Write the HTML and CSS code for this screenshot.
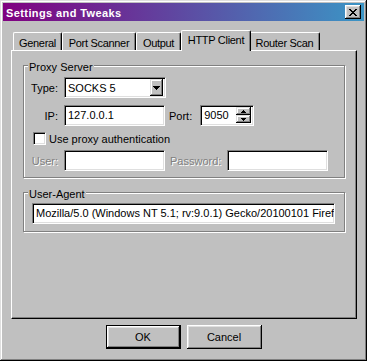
FILE: index.html
```html
<!DOCTYPE html>
<html lang="en">
<head>
  <meta charset="UTF-8">
  <title>Settings and Tweaks</title>
  <link rel="stylesheet" href="styles.css">
</head>
<body>
  <div class="window">
    <!-- Caption bar -->
    <div class="titlebar">
      <span class="title">Settings and Tweaks</span>
      <span class="close">
        <svg width="8" height="7" viewBox="0 0 8 7" shape-rendering="crispEdges">
          <path d="M0 0h2v1H0z M6 0h2v1H6z M1 1h2v1H1z M5 1h2v1H5z M2 2h4v1H2z M3 3h2v1H3z M2 4h4v1H2z M1 5h2v1H1z M5 5h2v1H5z M0 6h2v1H0z M6 6h2v1H6z" fill="#000"/>
        </svg>
      </span>
    </div>

    <div class="client">
      <div class="tabs">
        <div class="tab tab-general">General</div>
        <div class="tab tab-scanner">Port Scanner</div>
        <div class="tab tab-output">Output</div>
        <div class="tab tab-http active">HTTP Client</div>
        <div class="tab tab-router">Router Scan</div>
      </div>

      <div class="panel">
        <div class="group proxy">
          <span class="group-title">Proxy Server</span>

          <div class="row row-type">
            <span class="lbl">Type:</span>
            <div class="combo">
              <span class="combo-text">SOCKS 5</span>
              <span class="combo-btn">
                <svg width="7" height="4" viewBox="0 0 7 4" shape-rendering="crispEdges">
                  <path d="M0 0h7v1H0z M1 1h5v1H1z M2 2h3v1H2z M3 3h1v1H3z" fill="#000"/>
                </svg>
              </span>
            </div>
          </div>

          <div class="row row-ip">
            <span class="lbl">IP:</span>
            <div class="edit edit-ip">127.0.0.1</div>
            <span class="lbl-port">Port:</span>
            <div class="edit spin-edit">
              <span class="spin-text">9050</span>
              <span class="spin">
                <span class="spin-btn">
                  <svg width="5" height="3" viewBox="0 0 5 3" shape-rendering="crispEdges">
                    <path d="M2 0h1v1H2z M1 1h3v1H1z M0 2h5v1H0z" fill="#000"/>
                  </svg>
                </span>
                <span class="spin-btn">
                  <svg width="5" height="3" viewBox="0 0 5 3" shape-rendering="crispEdges">
                    <path d="M0 0h5v1H0z M1 1h3v1H1z M2 2h1v1H2z" fill="#000"/>
                  </svg>
                </span>
              </span>
            </div>
          </div>

          <div class="row row-check">
            <span class="checkbox"></span>
            <span class="check-label">Use proxy authentication</span>
          </div>

          <div class="row row-user">
            <span class="lbl disabled">User:</span>
            <div class="edit edit-user"></div>
            <span class="lbl-pass disabled">Password:</span>
            <div class="edit edit-pass"></div>
          </div>
        </div>

        <div class="group agent">
          <span class="group-title">User-Agent</span>
          <div class="edit edit-agent">Mozilla/5.0 (Windows NT 5.1; rv:9.0.1) Gecko/20100101 Firefox/9.0.1</div>
        </div>
      </div>

      <div class="buttons">
        <button class="btn default">OK</button>
        <button class="btn">Cancel</button>
      </div>
    </div>
  </div>
</body>
</html>
```

FILE: styles.css
```css
body {
  margin: 0;
  font-family: "Liberation Sans", Arial, sans-serif;
  font-size: 11px;
  color: #000;
  background: #c0c0c0;
}
/* Outer window frame */
.window {
  width: 367px;
  height: 361px;
  box-sizing: border-box;
  padding: 3px;
  background: #c0c0c0;
  box-shadow: inset -1px -1px #000, inset 1px 1px #dfdfdf, inset -2px -2px #808080, inset 2px 2px #fff;
  display: flex;
  flex-direction: column;
}
.titlebar {
  height: 18px;
  flex: none;
  display: flex;
  align-items: center;
  justify-content: space-between;
  padding: 0 3px 0 3px;
  background: linear-gradient(90deg, #800080, #3b95c5);
}
.title {
  color: #fff;
  font-weight: bold;
  letter-spacing: 0.4px;
  line-height: 14px;
  margin-top: 2px;
}
.close {
  width: 16px;
  height: 14px;
  box-sizing: border-box;
  display: flex;
  align-items: center;
  justify-content: center;
  background: #c0c0c0;
  box-shadow: inset -1px -1px #000, inset 1px 1px #fff, inset -2px -2px #808080, inset 2px 2px #dfdfdf;
}
.client {
  flex: 1;
  padding: 9px 0 0 8px;
}
/* Tab strip */
.tabs {
  display: flex;
  align-items: flex-end;
  height: 20px;
  padding-left: 2px;
}
.tab {
  height: 18px;
  box-sizing: border-box;
  padding-top: 3px;
  line-height: 14px;
  letter-spacing: -0.3px;
  text-align: center;
  border-top: 1px solid #fff;
  border-left: 1px solid #fff;
  border-right: 1px solid #000;
  border-radius: 2px 2px 0 0;
  box-shadow: inset -1px 0 #808080;
  white-space: nowrap;
}
.tab-general { width: 49px; }
.tab-scanner { width: 74px; }
.tab-output { width: 45px; }
.tab-http { width: 70px; }
.tab-router { width: 71px; }
.tab.active {
  height: 21px;
  margin: 0 -2px -1px 0;
  padding-top: 2px;
  background: #c0c0c0;
  position: relative;
  z-index: 1;
}
.panel {
  width: 346px;
  height: 269px;
  box-sizing: border-box;
  padding: 14px 11px 0 11px;
  border-top: 1px solid #fff;
  border-left: 1px solid #fff;
  border-right: 1px solid #000;
  border-bottom: 1px solid #000;
  box-shadow: inset -1px -1px #808080;
}
/* Etched group boxes */
.group {
  position: relative;
  border: 1px solid #808080;
  box-shadow: inset 1px 1px #fff, 1px 1px #fff;
}
.group-title {
  position: absolute;
  top: -6px;
  left: 4px;
  padding: 0 1px;
  line-height: 14px;
  background: #c0c0c0;
}
.proxy {
  height: 113px;
  box-sizing: border-box;
  padding-top: 11px;
}
.agent {
  height: 40px;
  box-sizing: border-box;
  margin-top: 14px;
  padding: 10px 7px 0 8px;
}
.row {
  display: flex;
  align-items: center;
}
.lbl {
  width: 34px;
  text-align: right;
  margin-right: 6px;
}
.disabled {
  color: #808080;
  text-shadow: 1px 1px #fff;
}
/* Sunken fields */
.edit, .combo, .checkbox {
  box-sizing: border-box;
  background: #fff;
  border-top: 1px solid #808080;
  border-left: 1px solid #808080;
  border-right: 1px solid #fff;
  border-bottom: 1px solid #fff;
  box-shadow: inset 1px 1px #000, inset -1px -1px #dfdfdf;
}
.edit {
  height: 21px;
  line-height: 17px;
  padding: 1px 0 0 3px;
  white-space: nowrap;
  overflow: hidden;
}
.row-type {
  height: 21px;
}
.combo {
  width: 102px;
  height: 21px;
  display: flex;
  align-items: center;
  justify-content: space-between;
  padding: 2px;
}
.combo-text {
  padding: 1px 0 0 1px;
}
.combo-btn, .spin-btn {
  display: flex;
  align-items: center;
  justify-content: center;
  background: #c0c0c0;
  box-shadow: inset -1px -1px #000, inset 1px 1px #dfdfdf, inset -2px -2px #808080, inset 2px 2px #fff;
}
.combo-btn {
  width: 13px;
  height: 17px;
}
.row-ip {
  height: 21px;
  margin-top: 7px;
}
.edit-ip {
  width: 101px;
}
.lbl-port {
  margin: 0 8px 0 4px;
}
.spin-edit {
  width: 54px;
  display: flex;
  justify-content: space-between;
  padding: 0 2px 0 3px;
}
.spin-text {
  padding-top: 1px;
}
.spin {
  display: flex;
  flex-direction: column;
  padding-top: 1px;
}
.spin-btn {
  width: 15px;
  height: 8px;
}
.row-check {
  height: 17px;
  margin-top: 4px;
}
.checkbox {
  width: 13px;
  height: 13px;
  margin: 0 3px 0 9px;
}
.row-user {
  height: 21px;
  margin-top: 3px;
}
.edit-user {
  width: 101px;
}
.lbl-pass {
  margin: 0 6px 0 5px;
}
.edit-pass {
  width: 101px;
}
.edit-agent {
  width: 303px;
}
/* Dialog buttons */
.buttons {
  display: flex;
  justify-content: center;
  gap: 6px;
  margin: 6px 0 0 -8px;
}
.btn {
  width: 75px;
  height: 24px;
  padding: 0;
  font-family: inherit;
  font-size: 11px;
  color: #000;
  background: #c0c0c0;
  border: none;
  box-shadow: inset -1px -1px #000, inset 1px 1px #fff, inset -2px -2px #808080, inset 2px 2px #dfdfdf;
}
.btn.default {
  border: 1px solid #000;
}
```
